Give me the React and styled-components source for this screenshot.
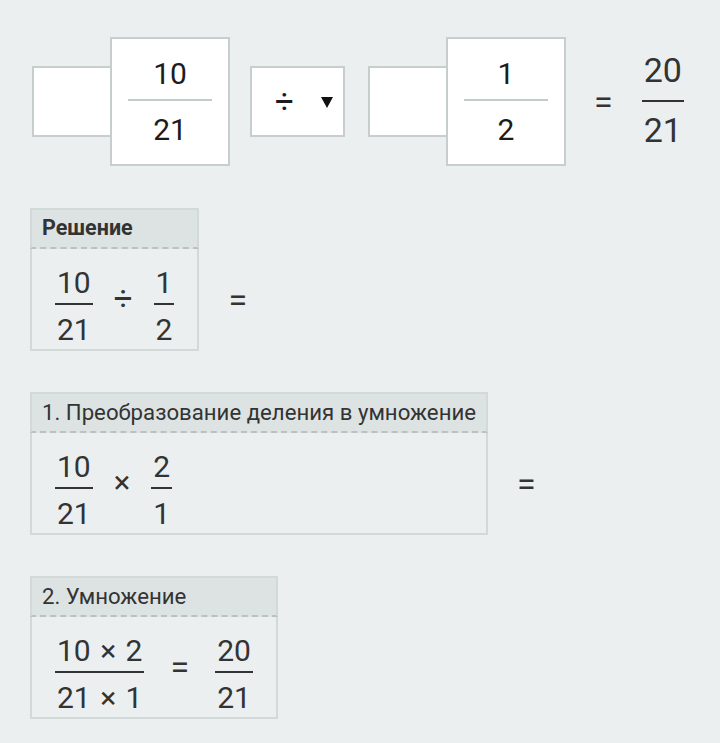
import React from 'react';
import styled, { createGlobalStyle } from 'styled-components';

const GlobalStyle = createGlobalStyle`
  html, body {
    margin: 0;
    padding: 0;
    background: #ebeff0;
  }
  body {
    font-family: Roboto, "Noto Sans", sans-serif;
    color: #333;
  }
`;

export default function App() {
  return (
    <>
      <GlobalStyle />
      <Page>
        <TopRow>
          <FractionInput num="10" den="21" />
          <OperatorSelect>
            <span>÷</span>
            <Caret viewBox="0 0 12 12">
              <polygon points="0,1 12,1 6,12" fill="#111" />
            </Caret>
          </OperatorSelect>
          <FractionInput num="1" den="2" />
          <TopEquals>=</TopEquals>
          <ResultFrac>
            <Frac $size={34} $line={40} $gapTop={10} $gapBottom={8}>
              <Num>20</Num>
              <Bar />
              <Num>21</Num>
            </Frac>
          </ResultFrac>
        </TopRow>

        <Step title="Решение" bold equals>
          <Fraction num="10" den="21" />
          <Op $size={33}>÷</Op>
          <Fraction num="1" den="2" />
        </Step>

        <Step title="1. Преобразование деления в умножение" equals>
          <Fraction num="10" den="21" />
          <Op $size={31}>×</Op>
          <Fraction num="2" den="1" />
        </Step>

        <Step title="2. Умножение">
          <Fraction num="10 × 2" den="21 × 1" />
          <Op $size={34} $wide>=</Op>
          <Fraction num="20" den="21" />
        </Step>
      </Page>
    </>
  );
}

function FractionInput({ num, den }) {
  return (
    <InputGroup>
      <WholeBox />
      <FracBox>
        <InputText>{num}</InputText>
        <InputLine />
        <InputText>{den}</InputText>
      </FracBox>
    </InputGroup>
  );
}

function Fraction({ num, den }) {
  return (
    <Frac $size={30} $line={36} $gapTop={2} $gapBottom={7} $offset={15}>
      <Num>{num}</Num>
      <Bar />
      <Num>{den}</Num>
    </Frac>
  );
}

function Step({ title, bold, equals, children }) {
  return (
    <Section>
      <StepHeader $bold={bold}>{title}</StepHeader>
      <StepBody>{children}</StepBody>
      {equals && <SideEquals>=</SideEquals>}
    </Section>
  );
}

const Page = styled.div`
  padding: 37px 0 20px 30px;
  min-height: 743px;
  box-sizing: border-box;
`;

const TopRow = styled.div`
  display: flex;
  align-items: center;
  margin-left: 2px;
  margin-bottom: 42px;
`;

const InputGroup = styled.div`
  display: flex;
  align-items: center;
`;

const WholeBox = styled.div`
  width: 80px;
  height: 71px;
  box-sizing: border-box;
  background: #fff;
  border: 2px solid #c7cece;
`;

const FracBox = styled.div`
  width: 120px;
  height: 129px;
  margin-left: -2px;
  box-sizing: border-box;
  background: #fff;
  border: 2px solid #c7cece;
  display: flex;
  flex-direction: column;
  align-items: center;
  justify-content: center;
`;

const InputText = styled.div`
  width: 84px;
  text-align: center;
  font-size: 30px;
  line-height: 36px;
  color: #1c1c1c;
`;

const InputLine = styled.div`
  width: 84px;
  height: 2px;
  margin: 7px 0 11px;
  background: #c4cbcb;
`;

const OperatorSelect = styled.div`
  width: 95px;
  height: 71px;
  box-sizing: border-box;
  margin: 0 23px 0 20px;
  padding: 0 10px 0 23px;
  background: #fff;
  border: 2px solid #c7cece;
  display: flex;
  align-items: center;
  justify-content: space-between;
  font-size: 33px;
  line-height: 36px;
  color: #1c1c1c;
`;

const Caret = styled.svg`
  width: 12px;
  height: 12px;
`;

const TopEquals = styled.div`
  margin: 0 29px 0 28px;
  font-size: 34px;
  line-height: 36px;
  color: #333;
`;

const ResultFrac = styled.div`
  display: flex;
  margin-bottom: 3px;
`;

const Frac = styled.div`
  display: inline-flex;
  flex-direction: column;
  align-items: center;
  margin-top: ${p => p.$offset || 0}px;
  font-size: ${p => p.$size}px;
  line-height: ${p => p.$line}px;
  color: #333;

  & > span:first-child {
    margin-bottom: ${p => p.$gapTop}px;
  }
  & > span:last-child {
    margin-top: ${p => p.$gapBottom}px;
  }
`;

const Num = styled.span`
  padding: 0 2px;
  white-space: pre;
  word-spacing: 2px;
`;

const Bar = styled.i`
  align-self: stretch;
  height: 2px;
  background: #333;
`;

const Section = styled.div`
  display: grid;
  grid-template-columns: auto auto;
  justify-content: start;
  margin-bottom: 41px;
`;

const StepHeader = styled.div`
  grid-column: 1;
  padding: 6px 10px 7px;
  background: #dde3e3;
  border: 2px solid #d2d9d9;
  border-bottom: 2px dashed #b9c1c1;
  font-size: ${p => (p.$bold ? 21.5 : 22.2)}px;
  line-height: 24px;
  font-weight: ${p => (p.$bold ? 700 : 400)};
  color: #333;
  white-space: nowrap;
`;

const StepBody = styled.div`
  grid-column: 1;
  height: 102px;
  box-sizing: border-box;
  padding: 0 23px;
  display: flex;
  align-items: center;
  border: 2px solid #d2d9d9;
  border-top: none;
`;

const Op = styled.span`
  margin: 0 ${p => (p.$wide ? 26 : 21)}px;
  font-size: ${p => p.$size}px;
  line-height: 36px;
  color: #333;
`;

const SideEquals = styled.div`
  grid-column: 2;
  grid-row: 2;
  align-self: center;
  margin-left: 29px;
  font-size: 34px;
  line-height: 36px;
  color: #333;
`;
